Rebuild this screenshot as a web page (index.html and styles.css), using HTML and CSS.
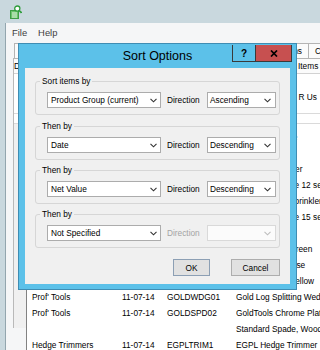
FILE: index.html
```html
<!DOCTYPE html>
<html lang="en">
<head>
<meta charset="utf-8">
<title>Sort Options</title>
<link rel="stylesheet" href="styles.css">
</head>
<body>
<div class="app">
  <header class="titlebar">
    <svg class="app-icon" width="12" height="14" viewBox="0 0 12 14" aria-hidden="true">
      <rect x="0.5" y="5.5" width="8" height="8" fill="#6cc46c" stroke="#3f9e46"/>
      <path d="M2 8h5M2 10h5M2 12h5" stroke="#e6f6e6" stroke-width="1"/>
      <circle cx="7.3" cy="3.6" r="2.6" fill="#ffffff" stroke="#2f9d3c" stroke-width="1.3"/>
      <path d="M9.2 5.5l2.3 2.3" stroke="#2f9d3c" stroke-width="1.7"/>
    </svg>
  </header>

  <div class="window">
    <nav class="menubar"><span>File</span><span>Help</span></nav>
    <div class="workspace">
      <div class="tabs">
        <span class="tab tab-1">Orders</span>
        <span class="tab tab-2">Invoices</span>
        <span class="tab tab-3">Deliveries</span>
        <span class="tab tab-4">Stock Items</span>
        <span class="tab tab-5">Customers</span>
      </div>
      <div class="panel">
        <div class="subtabs">
          <span class="subtab">Details</span>
          <span class="subtab">Delivery</span>
          <span class="subtab">Payment</span>
          <span class="subtab">Notes</span>
          <span class="subtab last">Items</span>
        </div>
        <div class="supplier">
          <span>Supplier</span><span></span><span>Account</span><span class="cell">Gardening Tools R Us</span>
        </div>
        <div class="filter"></div>
        <div class="list">
          <div class="row"><span>Garden Care</span><span>10-07-14</span><span>GCLRAKE1</span><span class="cell">Gold Lawn Rake</span></div>
          <div class="row"><span>Garden Care</span><span>10-07-14</span><span>GCSHEAR2</span><span class="cell">Grass Shears</span></div>
          <div class="row"><span>Garden Care</span><span>10-07-14</span><span>GCSGH01</span><span class="cell">Spray Gun Holder</span></div>
          <div class="row"><span>Watering</span><span>10-07-14</span><span>WTHOSE12</span><span class="cell">Gold Spray Hose 12 setting</span></div>
          <div class="row"><span>Watering</span><span>10-07-14</span><span>WTSPRK01</span><span class="cell">Gold Rotating Sprinkler</span></div>
          <div class="row"><span>Watering</span><span>10-07-14</span><span>WTHOSE15</span><span class="cell">Gold Spray Hose 15 setting</span></div>
          <div class="row"><span>Watering</span><span>10-07-14</span><span>WTCAN01</span><span class="cell">Watering Can</span></div>
          <div class="row"><span>Watering</span><span>10-07-14</span><span>WTCAN02</span><span class="cell">Watering Can, green</span></div>
          <div class="row"><span>Watering</span><span>11-07-14</span><span>WTHOSE01</span><span class="cell">Gold Garden Hose</span></div>
          <div class="row"><span>Watering</span><span>11-07-14</span><span>WTCAN03</span><span class="cell">Watering Can, yellow</span></div>
          <div class="row"><span>Prof' Tools</span><span>11-07-14</span><span>GOLDWDG01</span><span class="cell">Gold Log Splitting Wedge</span></div>
          <div class="row"><span>Prof' Tools</span><span>11-07-14</span><span>GOLDSPD02</span><span class="cell">GoldTools Chrome Plated Spade</span></div>
          <div class="row"><span></span><span></span><span></span><span class="cell">Standard Spade, Wooden Handle</span></div>
          <div class="row"><span>Hedge Trimmers</span><span>11-07-14</span><span>EGPLTRIM1</span><span class="cell">EGPL Hedge Trimmer</span></div>
        </div>
      </div>
    </div>
  </div>

  <section class="dialog" role="dialog" aria-label="Sort Options">
    <div class="dlg-title">
      <h1>Sort Options</h1>
      <div class="caption">
        <span class="cap-help">?</span>
        <span class="cap-close">
          <svg width="8" height="7" viewBox="0 0 8 7" aria-hidden="true"><path d="M1 0.5l6 6M7 0.5l-6 6" stroke="#000" stroke-width="1.7"/></svg>
        </span>
      </div>
    </div>
    <div class="dlg-body">
      <fieldset>
        <legend>Sort items by</legend>
        <div class="sort-row">
          <div class="combo wide"><span>Product Group (current)</span><svg class="chev" width="7" height="5" viewBox="0 0 7 5"><path d="M0.5 0.8l3 3 3-3" fill="none" stroke="#333" stroke-width="1.1"/></svg></div>
          <span class="dir-label">Direction</span>
          <div class="combo narrow"><span>Ascending</span><svg class="chev" width="7" height="5" viewBox="0 0 7 5"><path d="M0.5 0.8l3 3 3-3" fill="none" stroke="#333" stroke-width="1.1"/></svg></div>
        </div>
      </fieldset>
      <fieldset class="second">
        <legend>Then by</legend>
        <div class="sort-row">
          <div class="combo wide"><span>Date</span><svg class="chev" width="7" height="5" viewBox="0 0 7 5"><path d="M0.5 0.8l3 3 3-3" fill="none" stroke="#333" stroke-width="1.1"/></svg></div>
          <span class="dir-label">Direction</span>
          <div class="combo narrow"><span>Descending</span><svg class="chev" width="7" height="5" viewBox="0 0 7 5"><path d="M0.5 0.8l3 3 3-3" fill="none" stroke="#333" stroke-width="1.1"/></svg></div>
        </div>
      </fieldset>
      <fieldset>
        <legend>Then by</legend>
        <div class="sort-row">
          <div class="combo wide"><span>Net Value</span><svg class="chev" width="7" height="5" viewBox="0 0 7 5"><path d="M0.5 0.8l3 3 3-3" fill="none" stroke="#333" stroke-width="1.1"/></svg></div>
          <span class="dir-label">Direction</span>
          <div class="combo narrow"><span>Descending</span><svg class="chev" width="7" height="5" viewBox="0 0 7 5"><path d="M0.5 0.8l3 3 3-3" fill="none" stroke="#333" stroke-width="1.1"/></svg></div>
        </div>
      </fieldset>
      <fieldset>
        <legend>Then by</legend>
        <div class="sort-row">
          <div class="combo wide"><span>Not Specified</span><svg class="chev" width="7" height="5" viewBox="0 0 7 5"><path d="M0.5 0.8l3 3 3-3" fill="none" stroke="#333" stroke-width="1.1"/></svg></div>
          <span class="dir-label disabled">Direction</span>
          <div class="combo narrow disabled"><span></span><svg class="chev" width="7" height="5" viewBox="0 0 7 5"><path d="M0.5 0.8l3 3 3-3" fill="none" stroke="#bdbdbd" stroke-width="1.1"/></svg></div>
        </div>
      </fieldset>
      <div class="buttons">
        <button class="btn ok" type="button">OK</button>
        <button class="btn cancel" type="button">Cancel</button>
      </div>
    </div>
  </section>
</div>
</body>
</html>
```

FILE: styles.css
```css
* { box-sizing: border-box; }

html, body {
  margin: 0;
  padding: 0;
}

body {
  width: 320px;
  height: 350px;
  overflow: hidden;
  background: #c9d8de;
  font-family: "Liberation Sans", Arial, sans-serif;
  font-size: 8.3px;
  color: #000;
}

.app {
  position: relative;
  width: 320px;
  height: 350px;
}

/* main window frame */
.titlebar {
  height: 23px;
  display: flex;
  align-items: flex-start;
  padding: 5px 0 0 10px;
}

.app-icon { display: block; }

.window {
  margin-left: 5px;
  border-left: 1px solid #93a6ae;
  background: #f5f6f7;
  height: 327px;
  overflow: hidden;
}

.menubar {
  height: 19px;
  display: flex;
  align-items: center;
  gap: 11px;
  padding-left: 6px;
  font-size: 9.4px;
  color: #404040;
}

.workspace {
  padding-left: 7px;
}

.tabs {
  display: flex;
  height: 16px;
  padding-top: 1px;
  margin-left: 1px;
  white-space: nowrap;
}

.tab {
  flex: none;
  display: flex;
  align-items: center;
  justify-content: flex-end;
  padding: 0 6px;
  border: 1px solid #b4b4b4;
  border-bottom: none;
  margin-right: -1px;
  background: #fbfbfb;
  color: #000;
  overflow: hidden;
}

.tab-1 { width: 64px; }
.tab-2 { width: 76px; }
.tab-3 { width: 82px; }
.tab-4 { width: 76px; }
.tab-5 { width: 70px; justify-content: flex-start; }

.panel {
  border-left: 1px solid #b9b9b9;
  border-top: 1px solid #b4b4b4;
  background: #f0f0f0;
  height: 270px;
}

.subtabs {
  display: flex;
  height: 15px;
  align-items: center;
  border-bottom: 1px solid #d2d2d2;
  background: #fbfbfb;
  white-space: nowrap;
}

.subtab { width: 71px; flex: none; }
.subtab.last { width: auto; }

.supplier {
  display: grid;
  grid-template-columns: 90px 45px 69px minmax(0, 1fr);
  height: 40px;
  padding: 17px 0 0 18px;
  line-height: 12px;
  background: #fff;
  border-bottom: 1px solid #dadada;
  white-space: nowrap;
}

.filter {
  height: 10px;
  background: #fff;
  border-bottom: 1px solid #dadada;
}

.list {
  margin-left: 12px;
  border-left: 1px solid #828282;
  background: #fff;
  padding: 5px 0 0 5px;
  height: 230px;
}

.row {
  display: grid;
  grid-template-columns: 90px 45px 69px minmax(0, 1fr);
  height: 16px;
  align-items: center;
  white-space: nowrap;
}

.cell { overflow: hidden; }

/* dialog */
.dialog {
  position: absolute;
  left: 18px;
  top: 43px;
  width: 279px;
  height: 247px;
  border: 1px solid #3f8db3;
  background: #5cc1e9;
  padding: 0 6px 5px;
  display: flex;
  flex-direction: column;
}

.dlg-title {
  height: 24px;
  flex: none;
  display: grid;
  grid-template-columns: 1fr auto 1fr;
  align-items: center;
}

.dlg-title h1 {
  grid-column: 2;
  margin: 0;
  font-size: 12.5px;
  font-weight: normal;
  color: #000;
  line-height: 24px;
}

.caption {
  grid-column: 3;
  justify-self: end;
  align-self: start;
  display: flex;
  margin-right: -2px;
  margin-top: 1px;
}

.cap-help {
  width: 24px;
  height: 17px;
  border: 1px solid #3a3a3a;
  border-top: none;
  display: flex;
  align-items: center;
  justify-content: center;
  font-weight: bold;
  font-size: 10px;
}

.cap-close {
  width: 36px;
  height: 17px;
  background: #c75050;
  border: 1px solid #3a3a3a;
  border-top: none;
  border-left: none;
  display: flex;
  align-items: center;
  justify-content: center;
}

.dlg-body {
  flex: 1;
  background: #f0f0f0;
  padding: 7px 10px 0;
  display: flex;
  flex-direction: column;
  gap: 4px;
}

fieldset {
  margin: 0;
  min-width: 0;
  border: 1px solid #d6d6d6;
  border-radius: 3px;
  padding: 5px 0 6px 11px;
}

fieldset.second { margin-top: 1px; }

legend {
  margin-left: -7px;
  padding: 0 2px;
  line-height: 12px;
}

.sort-row {
  display: flex;
  align-items: center;
  height: 16px;
}

.combo {
  height: 16px;
  border: 1px solid #acacac;
  background: #fff;
  display: flex;
  align-items: center;
  justify-content: space-between;
  padding: 0 3px 0 3px;
  white-space: nowrap;
}

.combo.wide { width: 114px; }
.combo.narrow { width: 69px; padding-left: 2px; padding-right: 4px; }

.combo.disabled {
  background: #fbfbfb;
  border-color: #d9d9d9;
}

.chev { display: block; flex: none; }

.dir-label {
  width: 46px;
  padding-left: 6px;
}

.dir-label.disabled { color: #a3a3a3; }

.buttons {
  display: flex;
  justify-content: flex-end;
  gap: 21px;
  margin-top: 7px;
}

.btn {
  height: 17px;
  padding: 0;
  font: inherit;
  color: #000;
  background: #e1e1e1;
  border: 1px solid #adadad;
  border-radius: 0;
}

.btn.ok { width: 37px; border-color: #8c9fb4; }
.btn.cancel { width: 49px; }
```
